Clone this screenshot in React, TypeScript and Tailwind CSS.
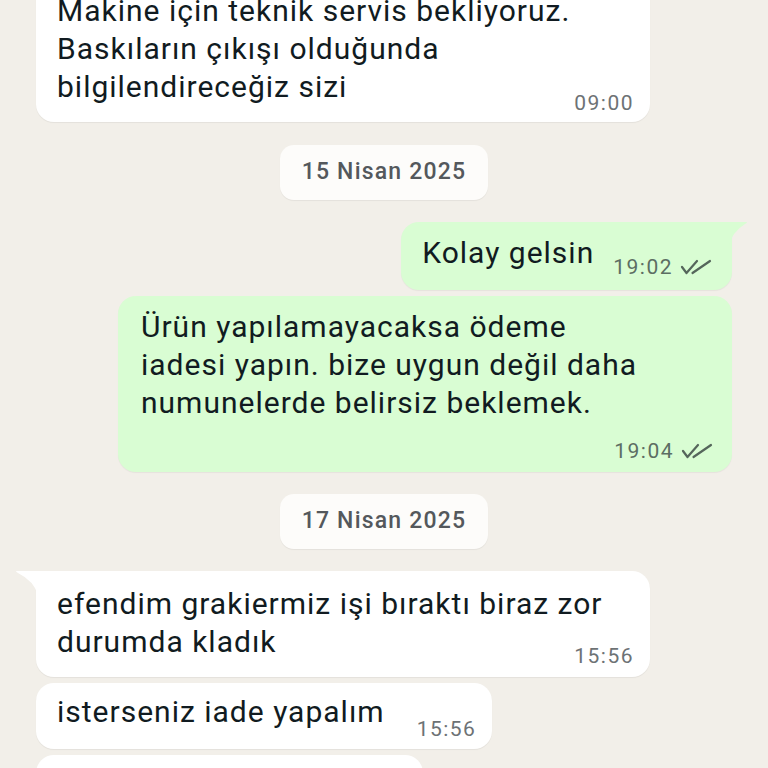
import React from 'react';

const font = { fontFamily: 'Roboto, "Noto Sans", Arial, sans-serif' };

const DoubleCheck = () => (
  <svg width="32" height="18" viewBox="0 0 32 18" fill="none" className="shrink-0">
    <path d="M2 9 L6.5 15 L17 3" stroke="#55665b" strokeWidth="2.2" strokeLinecap="round" strokeLinejoin="round" />
    <path d="M12.5 15 L30 3" stroke="#55665b" strokeWidth="2.2" strokeLinecap="round" />
  </svg>
);

const InTail = () => (
  <svg width="22" height="24" viewBox="0 0 22 24" className="absolute top-0 left-[-20px]">
    <path d="M0 0 H22 V24 Q18 10 2 2 Q0 1 0 0 Z" fill="#ffffff" />
  </svg>
);

const OutTail = () => (
  <svg width="18" height="24" viewBox="0 0 18 24" className="absolute top-0 right-[-15px]">
    <path d="M18 0 H0 V24 Q3 10 16 2 Q18 1 18 0 Z" fill="#d9fdd3" />
  </svg>
);

const DateChip = ({ label }: { label: string }) => (
  <div className="flex justify-center">
    <div className="flex h-[55px] w-[208px] items-center justify-center rounded-[14px] bg-[#fdfcfa] shadow-[0_1px_1px_rgba(0,0,0,0.06)]">
      <span className="text-[23px] font-medium tracking-[1.2px] text-[#54585c]">{label}</span>
    </div>
  </div>
);

const msg = 'text-[30px] leading-[38px] tracking-[1px] text-[#111b21] whitespace-nowrap';
const inTime = 'text-[21px] leading-[24px] tracking-[1.5px] text-[#6d7275]';
const outTime = 'text-[21px] leading-[24px] tracking-[1.5px] text-[#5c6e63]';

export default function App() {
  return (
    <div className="h-[768px] w-[768px] overflow-hidden bg-[#f2efe9]" style={font}>
      <div className="flex flex-col px-[36px]">
        {/* older incoming message, cut at top */}
        <div className="relative mt-[-22px] w-[614px] rounded-[18px] rounded-tl-none bg-white pl-[21px] pr-[16px] pt-[14px] pb-[7px] shadow-[0_1px_1px_rgba(0,0,0,0.06)]">
          <InTail />
          <div className={msg}>
            Makine için teknik servis bekliyoruz.
            <br />
            Baskıların çıkışı olduğunda
            <br />
            bilgilendireceğiz sizi
          </div>
          <div className={`${inTime} -mt-[15px] text-right`}>09:00</div>
        </div>

        <div className="mt-[23px]">
          <DateChip label="15 Nisan 2025" />
        </div>

        <div className="relative mt-[22px] flex items-end self-end rounded-[18px] rounded-tr-none bg-[#d9fdd3] pl-[21px] pr-[20px] pt-[12px] pb-[11px] shadow-[0_1px_1px_rgba(0,0,0,0.05)]">
          <OutTail />
          <div className={`${msg} mb-[7px]`}>Kolay gelsin</div>
          <div className="ml-[19px] flex items-center gap-[7px]">
            <span className={outTime}>19:02</span>
            <DoubleCheck />
          </div>
        </div>

        <div className="mt-[6px] w-[614px] self-end rounded-[18px] bg-[#d9fdd3] pl-[23px] pr-[19px] pt-[12px] pb-[9px] shadow-[0_1px_1px_rgba(0,0,0,0.05)]">
          <div className={msg}>
            Ürün yapılamayacaksa ödeme
            <br />
            iadesi yapın. bize uygun değil daha
            <br />
            numunelerde belirsiz beklemek.
          </div>
          <div className="mt-[17px] flex items-center justify-end gap-[7px]">
            <span className={outTime}>19:04</span>
            <DoubleCheck />
          </div>
        </div>

        <div className="mt-[22px]">
          <DateChip label="17 Nisan 2025" />
        </div>

        <div className="relative mt-[22px] w-[614px] rounded-[18px] rounded-tl-none bg-white pl-[21px] pr-[16px] pt-[14px] pb-[9px] shadow-[0_1px_1px_rgba(0,0,0,0.06)]">
          <InTail />
          <div className={msg}>
            efendim grakiermiz işi bıraktı biraz zor
            <br />
            durumda kladık
          </div>
          <div className={`${inTime} -mt-[17px] text-right`}>15:56</div>
        </div>

        <div className="mt-[6px] flex items-end self-start rounded-[18px] bg-white pl-[21px] pr-[16px] pt-[10px] pb-[8px] shadow-[0_1px_1px_rgba(0,0,0,0.06)]">
          <div className={`${msg} mb-[10px]`}>isterseniz iade yapalım</div>
          <div className={`${inTime} ml-[32px]`}>15:56</div>
        </div>

        <div className="mt-[6px] h-[66px] w-[387px] rounded-[18px] bg-white shadow-[0_1px_1px_rgba(0,0,0,0.06)]" />
      </div>
    </div>
  );
}
